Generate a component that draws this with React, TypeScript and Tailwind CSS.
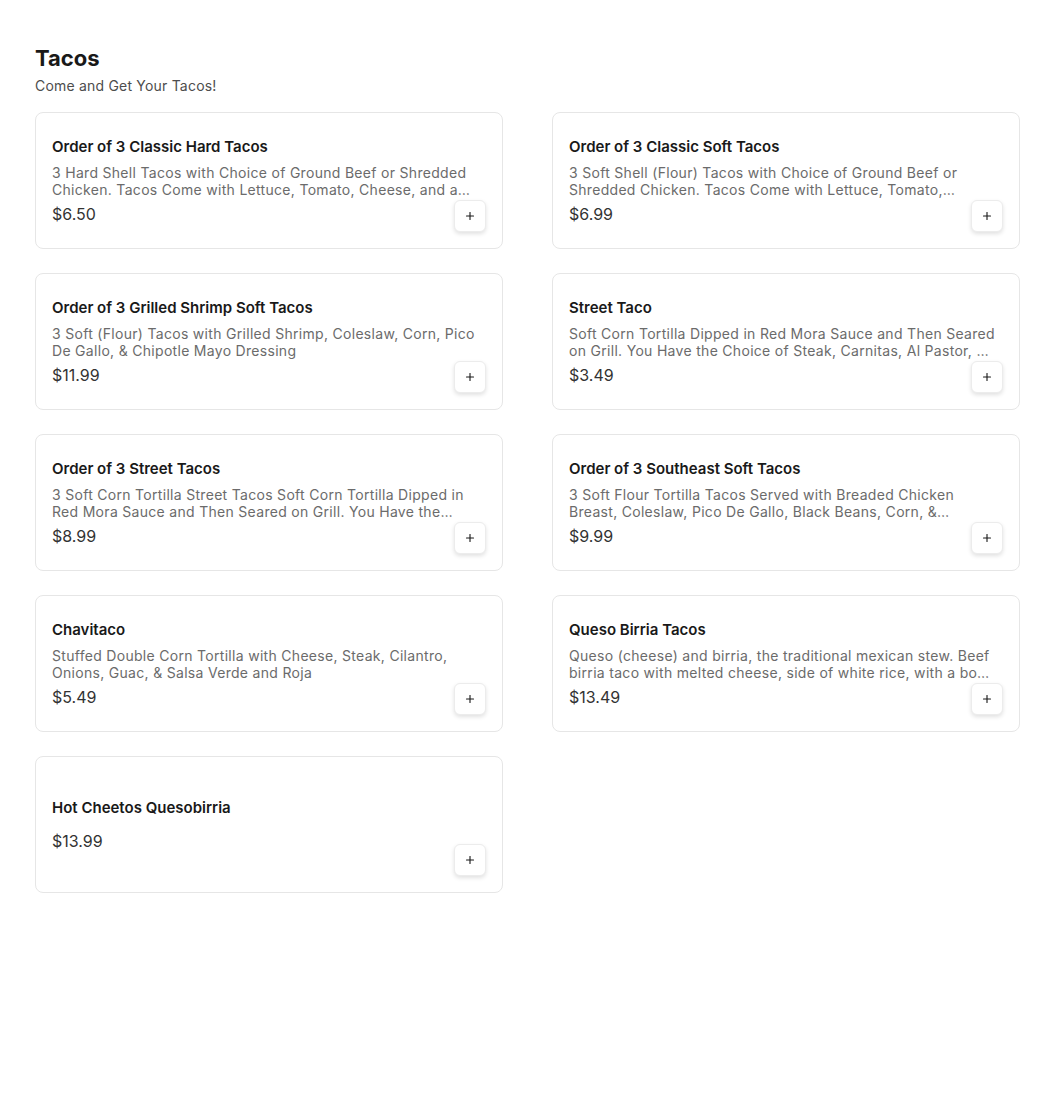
import { Plus } from 'lucide-react';

interface MenuItem {
  name: string;
  description: string;
  price: string;
}

const items: MenuItem[] = [
  {
    name: 'Order of 3 Classic Hard Tacos',
    description:
      '3 Hard Shell Tacos with Choice of Ground Beef or Shredded Chicken. Tacos Come with Lettuce, Tomato, Cheese, and a Side of Sour Cream',
    price: '$6.50',
  },
  {
    name: 'Order of 3 Classic Soft Tacos',
    description:
      '3 Soft Shell (Flour) Tacos with Choice of Ground Beef or Shredded Chicken. Tacos Come with Lettuce, Tomato, Cheese, and a Side of Sour Cream',
    price: '$6.99',
  },
  {
    name: 'Order of 3 Grilled Shrimp Soft Tacos',
    description: '3 Soft (Flour) Tacos with Grilled Shrimp, Coleslaw, Corn, Pico De Gallo, & Chipotle Mayo Dressing',
    price: '$11.99',
  },
  {
    name: 'Street Taco',
    description:
      'Soft Corn Tortilla Dipped in Red Mora Sauce and Then Seared on Grill. You Have the Choice of Steak, Carnitas, Al Pastor, or Chicken',
    price: '$3.49',
  },
  {
    name: 'Order of 3 Street Tacos',
    description:
      '3 Soft Corn Tortilla Street Tacos Soft Corn Tortilla Dipped in Red Mora Sauce and Then Seared on Grill. You Have the Choice of Steak, Carnitas, Al Pastor, or Chicken',
    price: '$8.99',
  },
  {
    name: 'Order of 3 Southeast Soft Tacos',
    description:
      '3 Soft Flour Tortilla Tacos Served with Breaded Chicken Breast, Coleslaw, Pico De Gallo, Black Beans, Corn, & Chipotle Mayo Dressing',
    price: '$9.99',
  },
  {
    name: 'Chavitaco',
    description: 'Stuffed Double Corn Tortilla with Cheese, Steak, Cilantro, Onions, Guac, & Salsa Verde and Roja',
    price: '$5.49',
  },
  {
    name: 'Queso Birria Tacos',
    description:
      'Queso (cheese) and birria, the traditional mexican stew. Beef birria taco with melted cheese, side of white rice, with a bowl of consomé',
    price: '$13.49',
  },
  {
    name: 'Hot Cheetos Quesobirria',
    description: '',
    price: '$13.99',
  },
];

function ItemCard({ item }: { item: MenuItem }) {
  return (
    <div className="relative h-[137px] bg-white border border-[#e6e6e6] rounded-lg flex flex-col justify-center px-4 pt-0.5">
      <h3 className="text-[15px] leading-5 font-semibold text-[#191919]">{item.name}</h3>
      <p className="mt-[7px] text-[14px] leading-[17px] tracking-[0.3px] text-[#6b6b6b] line-clamp-2 pr-2">
        {item.description}
      </p>
      <p className="mt-1 text-[16px] leading-6 text-[#333]">{item.price}</p>
      <button
        type="button"
        className="absolute right-4 bottom-4 w-8 h-8 flex items-center justify-center bg-white border border-[#ececec] rounded-md shadow-[0_2px_4px_rgba(0,0,0,0.12)]"
      >
        <Plus className="w-3 h-3 text-[#191919]" strokeWidth={2.25} />
      </button>
    </div>
  );
}

export default function App() {
  return (
    <div className="min-h-screen bg-white font-['Inter',sans-serif]">
      <div className="pl-[35px] pr-[30px] pt-[42px] pb-12">
        {/* Header */}
        <h1 className="text-[22px] leading-8 font-bold text-[#191919]">Tacos</h1>
        <p className="mt-0.5 text-[14px] leading-5 tracking-[0.2px] text-[#4d4d4d]">Come and Get Your Tacos!</p>

        {/* Items */}
        <div className="mt-4 grid grid-cols-2 gap-x-[49px] gap-y-6">
          {items.map((item) => (
            <ItemCard key={item.name} item={item} />
          ))}
        </div>
      </div>
    </div>
  );
}
